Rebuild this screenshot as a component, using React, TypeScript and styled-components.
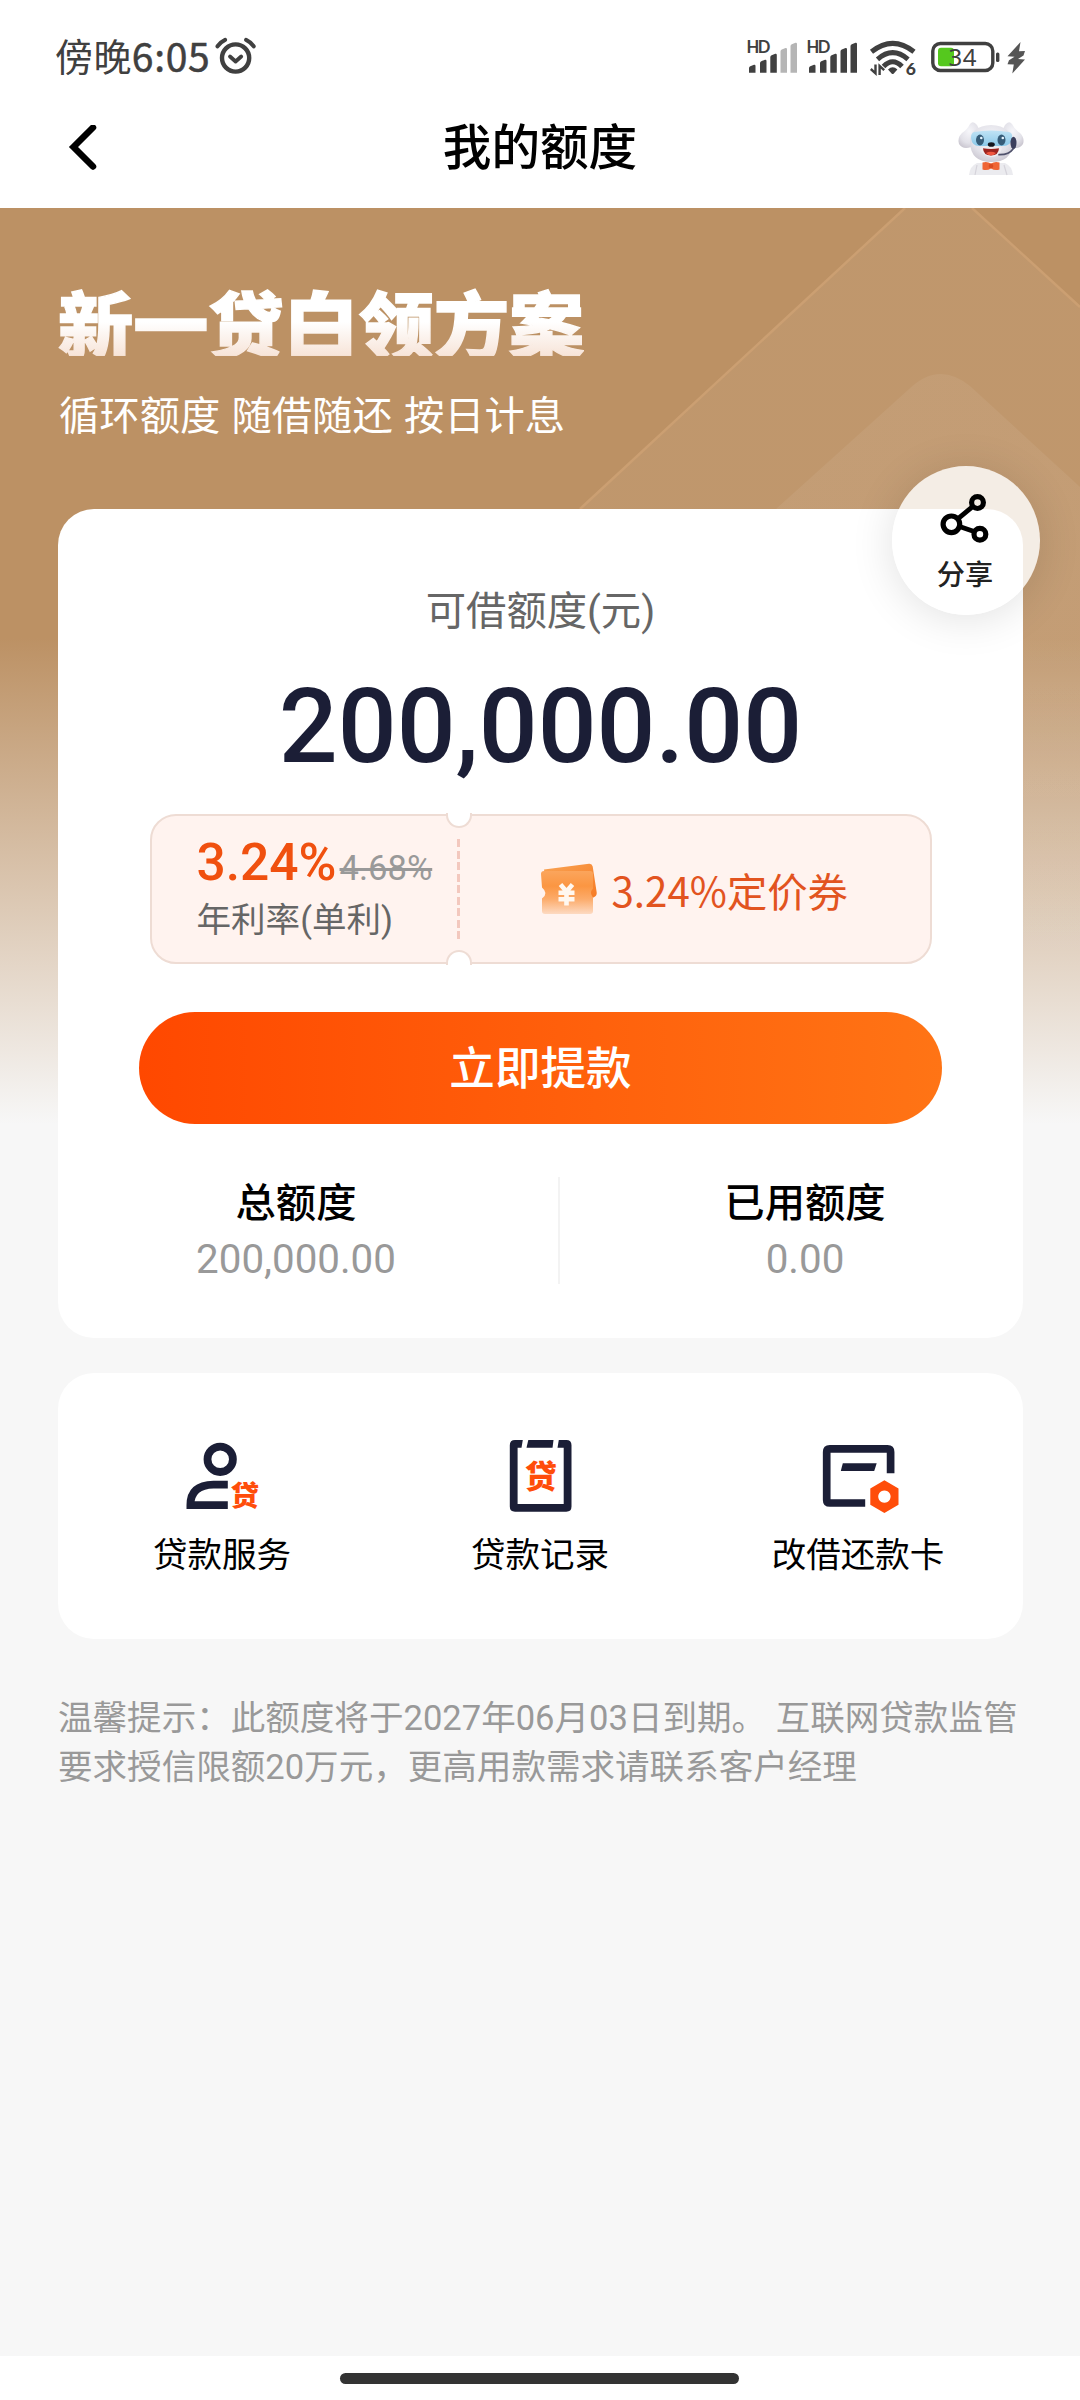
import React from "react";
import styled, { createGlobalStyle } from "styled-components";

const ui = `Roboto, "Noto Sans CJK SC", sans-serif`;
const cjk = `"Noto Sans CJK SC", sans-serif`;
const ink = "#1b1e36";
const accent = "#ff4d0a";

const GlobalStyle = createGlobalStyle`
  * { box-sizing: border-box; }
  body { margin: 0; background: #fff; font-family: ${ui}; }
`;

const Screen = styled.div`
  width: 1080px;
  height: 2400px;
  display: flex;
  flex-direction: column;
  background: #fff;
  overflow: hidden;
`;

const StatusBar = styled.header`
  height: 88px;
  padding: 26px 54px 0 55px;
  display: flex;
  align-items: center;
  justify-content: space-between;
  color: #404040;
`;

const Clock = styled.div`
  display: flex;
  align-items: center;
  gap: 5px;
  font: 400 38px/48px ${cjk};
  white-space: nowrap;
`;

const Time = styled.span`
  display: flex;
  letter-spacing: 0.4px;
  margin-top: -5px;
`;

const Digits = styled.span`
  font-size: 39px;
  letter-spacing: 0.7px;
  -webkit-text-stroke: 0.5px #404040;
`;

const NavBar = styled.nav`
  height: 120px;
  padding: 0 54px 0 68px;
  display: grid;
  grid-template-columns: 1fr auto 1fr;
  align-items: center;
`;

const NavTitle = styled.h1`
  margin: 2px 0 0 -14px;
  font: 500 48.6px/60px ${ui};
  color: #000;
`;

const NavEnd = styled.div`
  display: flex;
  justify-content: flex-end;
`;

const Body = styled.main`
  flex: 1;
  position: relative;
  padding: 79px 57px 0 58px;
  background: linear-gradient(
    to bottom,
    #bc9164 0,
    #bc9164 430px,
    #f7f7f7 916px
  );
`;

const Pattern = styled.svg`
  position: absolute;
  left: 0;
  top: 0;
`;

const Headline = styled.h2`
  position: relative;
  margin: 0;
  width: max-content;
  font: 900 75.2px/70px ${cjk};
  transform: scaleY(0.97);
  background: linear-gradient(to bottom, #fff 50%, #f7e4d8 100%);
  background-clip: text;
  -webkit-background-clip: text;
  -webkit-text-stroke: 1.5px transparent;
  color: transparent;
`;

const SubHeadline = styled.p`
  position: relative;
  margin: 36px 0 68px;
  padding-left: 1px;
  font: 400 40.32px/48px ${ui};
  word-spacing: 1.2px;
  color: #fff;
`;

const Card = styled.section`
  position: relative;
  background: #fff;
  border-radius: 36px;
`;

const QuotaCard = styled(Card)`
  height: 829px;
  padding-top: 79px;
  display: flex;
  flex-direction: column;
  align-items: center;
`;

const QuotaLabel = styled.div`
  font: 400 40.32px/48px ${ui};
  color: #666;
`;

const QuotaAmount = styled.div`
  margin-top: 39px;
  font: 500 103.68px/104px ${ui};
  color: ${ink};
`;

const ShareButton = styled.button`
  position: absolute;
  left: 834px;
  top: -43px;
  width: 148px;
  height: 149px;
  border: 0;
  padding: 26px 2px 0 0;
  border-radius: 50%;
  background: rgba(255, 255, 255, 0.81);
  box-shadow: 0 4px 44px rgba(0, 0, 0, 0.12);
  display: flex;
  flex-direction: column;
  align-items: center;
  gap: 14px;
  font: 500 28.2px/36px ${ui};
  color: #222;
`;

const Coupon = styled.div`
  position: relative;
  margin-top: 35px;
  width: 782px;
  height: 150px;
  display: grid;
  grid-template-columns: 307px 1fr;
  border: 2px solid #eedcd4;
  border-radius: 26px;
  background: #fff3ef;
`;

const Notch = styled.i<{ $edge: "top" | "bottom" }>`
  position: absolute;
  left: 294px;
  ${(p) => p.$edge}: -3px;
  width: 26px;
  height: 15px;
  background: #fff;
  border: 2px solid #eedcd4;
  border-${(p) => p.$edge}: 0;
  border-radius: ${(p) => (p.$edge === "top" ? "0 0 13px 13px" : "13px 13px 0 0")};
`;

const Rate = styled.div`
  position: relative;
  padding: 23px 0 0 45px;
`;

const Perforation = styled.div`
  position: absolute;
  right: -1px;
  top: 23px;
  width: 3px;
  height: 101px;
  background: repeating-linear-gradient(
    to bottom,
    #f3c8be 0,
    #f3c8be 8px,
    transparent 8px,
    transparent 11.55px
  );
`;

const RateRow = styled.div`
  height: 48px;
  display: flex;
  align-items: baseline;
  gap: 3px;
  white-space: nowrap;
  font: 500 51.5px/48px ${ui};
  color: #f0500f;
`;

const OldRate = styled.s`
  font-size: 34.56px;
  font-weight: 400;
  color: #999;
`;

const RateNote = styled.div`
  margin-top: 12px;
  font: 400 34.56px/42px ${ui};
  color: #666;
`;

const Voucher = styled.div`
  display: flex;
  align-items: center;
  padding-left: 80px;
  gap: 13px;
  font: 400 40.32px/48px ${cjk};
  color: #e2541f;
  white-space: nowrap;
`;

const VoucherText = styled.span`
  margin-top: 2px;
`;

const WithdrawButton = styled.button`
  margin-top: 48px;
  width: 803px;
  height: 112px;
  border: 0;
  padding: 3px 0 0;
  border-radius: 56px;
  background: linear-gradient(to right, #ff4800, #ff7415);
  font: 500 45.6px/60px ${ui};
  color: #fff;
`;

const Stats = styled.div`
  align-self: stretch;
  margin-top: 53px;
  height: 106px;
  display: grid;
  grid-template-columns: 476px 1fr 436px;
`;

const Stat = styled.div`
  padding-top: 3px;
  text-align: center;
`;

const StatLabel = styled.div`
  font: 500 40.32px/48px ${ui};
  color: #000;
`;

const StatValue = styled.div`
  margin-top: 8px;
  font: 400 40.32px/48px ${ui};
  color: #999;
`;

const Divider = styled.div`
  justify-self: start;
  margin-left: 24px;
  width: 2px;
  background: #f3f3f3;
`;

const ServiceCard = styled(Card)`
  margin-top: 35px;
  height: 266px;
  padding: 65px 6px 0 5px;
  display: grid;
  grid-template-columns: repeat(3, 1fr);
`;

const Service = styled.div`
  display: flex;
  flex-direction: column;
  align-items: center;
  gap: 20px;
  font: 400 34.56px/42px ${ui};
  color: #000;
`;

const Tip = styled.p`
  margin: 55px 0 0;
  font: 400 34.56px/49px ${ui};
  word-spacing: 1px;
  color: #999;
  white-space: pre-line;
`;

const HomeArea = styled.footer`
  height: 44px;
  padding: 17px 1px 0 0;
  display: flex;
  justify-content: center;
`;

const HomeBar = styled.div`
  width: 399px;
  height: 11px;
  border-radius: 6px;
  background: #333;
`;

const AlarmIcon = () => (
  <svg width="42" height="40" viewBox="216 37.500 42 40" fill="none" stroke="#404040" strokeLinecap="round">
    <circle cx="236.6" cy="58.5" r="13.6" strokeWidth="4.4" />
    <path d="M231 57l5.6 5 5.6-5" strokeWidth="3.8" strokeLinejoin="round" />
    <path d="M218.5 46.800q3.400-4.500 7.600-6.400M254.700 46.800q-3.400-4.500-7.600-6.400" strokeWidth="4" />
  </svg>
);

const BARS = [
  { x: 749, y: 64.7 },
  { x: 760, y: 59.7 },
  { x: 770.3, y: 53.7 },
  { x: 780.5, y: 48 },
  { x: 790.5, y: 42.7 },
];

const Signal = ({ dx, level }: { dx: number; level: number }) => (
  <g transform={`translate(${dx} 0)`}>
    <text x="746.400" y="53" fontFamily="Lato, sans-serif" fontWeight="700" fontSize="16.6" fill="#404040" textLength="24">
      HD
    </text>
    {BARS.map((b, i) => (
      <path
        key={b.x}
        d={`M${b.x} 72.800V${b.y + 3.5}q0-1.500 1.300-2l3.700-1.500q1.500-.3 1.500 1.200V72.800z`}
        fill={i < level ? "#404040" : "#b5b5b5"}
      />
    ))}
  </g>
);

const StatusIcons = () => (
  <svg width="280" height="44" viewBox="746 35 280 44">
    <Signal dx={0} level={3} />
    <Signal dx={60} level={5} />
    <g fill="none" stroke="#404040" strokeWidth="5">
      <path d="M871.500 51.800Q892.700 35 914 51.800" />
      <path d="M877.500 59.300Q892.700 46 908 59.300" />
      <path d="M883.500 66.500Q892.700 57 902 66.500" />
    </g>
    <path d="M888 69.500q4.700-4.500 9.400 0l-3.800 4.200q-.9.700-1.800 0z" fill="#404040" />
    <path d="M875.500 64.500v8.800l-4.700-4.300M879.600 75V66l4.600 4.200" fill="none" stroke="#404040" strokeWidth="2.400" />
    <text x="905.800" y="74.800" fontFamily="Lato, sans-serif" fontWeight="900" fontSize="17.500" fill="#404040">
      6
    </text>
    <rect x="932.800" y="43.500" width="60" height="27" rx="7.500" fill="none" stroke="#404040" strokeWidth="3.400" />
    <rect x="938" y="47.800" width="16" height="18.500" rx="3" fill="#55c81e" />
    <text x="948.500" y="65.800" fontFamily="Noto Sans, sans-serif" fontSize="24" fill="#404040" textLength="28">
      34
    </text>
    <rect x="996" y="52.500" width="3.400" height="9.500" rx="1.500" fill="#404040" />
    <path d="M1020.500 42l-13 14.200 7 .6-5.500 3.400-1.500 4 6.300.3-1.500 9 12.700-14-7-.5 5.500-3.500 1.500-4.500-6 .2z" fill="#555" />
  </svg>
);

const BackIcon = () => (
  <svg width="30" height="46" viewBox="68 125 30 46" fill="none" stroke="#000" strokeWidth="6.500" strokeLinecap="round">
    <path d="M93 127.500L73.500 147 93 166.500" />
  </svg>
);

const Mascot = () => (
  <svg width="70" height="56" viewBox="956 120 70 56">
    <defs>
      <radialGradient id="fur" cx="50%" cy="35%" r="70%">
        <stop offset="0" stopColor="#f6f6fa" />
        <stop offset="0.650" stopColor="#e2e1e8" />
        <stop offset="1" stopColor="#c8c4ce" />
      </radialGradient>
      <linearGradient id="visor" x1="0" y1="0" x2="0" y2="1">
        <stop offset="0" stopColor="#c0e3f5" />
        <stop offset="1" stopColor="#8ac8e8" />
      </linearGradient>
    </defs>
    <path d="M969 175q1-9 8-12h28q7 3 8 12z" fill="#ebebef" />
    <path d="M977 165l-2 10M1004 165l3 10" stroke="#d5d3da" strokeWidth="1.200" />
    <path d="M970 124q3-4 7 1l3 6-9 16q-8 3-12-3-2-6 3-11 5-3 8-9z" fill="url(#fur)" />
    <path d="M1012 124q-3-4-7 1l-3 6 9 16q8 3 12-3 2-6-3-11-5-3-8-9z" fill="url(#fur)" />
    <path d="M970 143q0-17 21-18 22 1 21 19 0 18-21 18-20 0-21-19z" fill="url(#fur)" />
    <path d="M974 132q17-3 35 0 4 1 3 6-1 8-9 8h-24q-7 0-8-8 0-5 3-6z" fill="url(#visor)" />
    <ellipse cx="980" cy="140" rx="4" ry="5.400" fill="#365c78" />
    <ellipse cx="1001.500" cy="140" rx="4" ry="5.400" fill="#365c78" />
    <circle cx="981.300" cy="138" r="1.300" fill="#e7f6ff" />
    <circle cx="1002.800" cy="138" r="1.300" fill="#e7f6ff" />
    <path d="M980 148q11-5 22 0-2 9-11 9-9-1-11-9z" fill="#eeecf0" />
    <ellipse cx="991.300" cy="144.500" rx="3.500" ry="2.300" fill="#15171f" />
    <path d="M983 148.200q8 1.500 16 0-.3 7.200-8 7.400-7.700-.2-8-7.400z" fill="#9c231f" />
    <path d="M986 153q4.800-2.400 10 0-1.800 2.200-5 2.400-3.200-.2-5-2.400z" fill="#f0563f" />
    <ellipse cx="1013.500" cy="143" rx="3" ry="6.200" fill="#3c3f5c" />
    <path d="M1013 149q-4 6-14 5.700" fill="none" stroke="#50526c" strokeWidth="1.700" strokeLinecap="round" />
    <path d="M982.500 162.500q4.500-1.500 8.500 1 4-2.500 8.500-1v7q-4.500 1.500-8.500-1-4 2.500-8.500 1z" fill="#ef6535" />
    <circle cx="991" cy="166" r="2.300" fill="#d94c22" />
  </svg>
);

const ShareIcon = () => (
  <svg width="50" height="52" viewBox="940.500 492 50 52" fill="none" stroke="#000" strokeWidth="5.200">
    <circle cx="951.900" cy="524.300" r="8.300" />
    <circle cx="978" cy="502.600" r="5.900" />
    <circle cx="980.400" cy="534.200" r="5.900" />
    <path d="M958.300 518.800L973.400 506.400M960 526.400L974.600 531.600" strokeWidth="4.800" />
  </svg>
);

const VoucherIcon = () => (
  <svg width="60" height="56" viewBox="540 861.500 60 56">
    <defs>
      <linearGradient id="back" x1="0" y1="0" x2="1" y2="1">
        <stop offset="0" stopColor="#f9a353" />
        <stop offset="1" stopColor="#f67a24" />
      </linearGradient>
      <linearGradient id="front" x1="0" y1="0" x2="0" y2="1">
        <stop offset="0" stopColor="#fba55c" />
        <stop offset="0.350" stopColor="#fb9642" />
        <stop offset="0.650" stopColor="#fcab6a" />
        <stop offset="1" stopColor="#fddac2" />
      </linearGradient>
    </defs>
    <path d="M545 870l45-5.800q3-.3 3.700 2.700l4 26q.3 3-2.500 4.500l-5 3-44-21z" fill="url(#back)" />
    <path
      d="M545 871.500h46q3 0 3 3v14.500q-4 4 0 9v13.500q0 3-3 3h-45q-3 0-3-3v-12.500q7-5 0-11l-1-13.500q0-3 3-3z"
      fill="url(#front)"
    />
    <path
      d="M561.500 885l6 7 6-7M559.500 893.200h16M559.500 899.800h16M567.500 892v14"
      fill="none"
      stroke="#fff8f0"
      strokeWidth="4.600"
    />
  </svg>
);

const PersonLoanIcon = () => (
  <svg width="84" height="76" viewBox="180.500 1438 84 76">
    <circle cx="220.700" cy="1459.300" r="12.700" fill="none" stroke={ink} strokeWidth="7.800" />
    <path d="M228.300 1484.600H214Q190.900 1485 190.900 1505.100H228.300" fill="none" stroke={ink} strokeWidth="7.800" />
    <text x="231" y="1506" fontFamily="Noto Sans CJK SC, sans-serif" fontWeight="900" fontSize="28.500" fill={accent}>
      贷
    </text>
  </svg>
);

const RecordIcon = () => (
  <svg width="84" height="76" viewBox="498.500 1438 84 76" fill={ink}>
    <path d="M523.300 1440H515.500Q510.300 1440 510.300 1445.200V1506.500Q510.300 1511.700 515.500 1511.700H566.800Q572 1511.700 572 1506.500V1445.200Q572 1440 566.800 1440H559.300L558 1447.700H564.200V1504H518.100V1447.700H522z" />
    <path d="M528.800 1440H554L553 1447.700H527z" />
    <text x="525.200" y="1488.200" fontFamily="Noto Sans CJK SC, sans-serif" fontWeight="900" fontSize="32" fill={accent}>
      贷
    </text>
  </svg>
);

const CardSwapIcon = () => (
  <svg width="84" height="76" viewBox="816.500 1438 84 76">
    <path d="M891.100 1473.300V1452Q891.100 1448.800 888 1448.800H830.300Q827.200 1448.800 827.200 1452V1499.900Q827.200 1503 830.300 1503H865.700" fill="none" stroke={ink} strokeWidth="7.700" />
    <path d="M843.300 1463.200H877.200L874.700 1471H841.300z" fill={ink} />
    <path
      d="M884.900 1480.300L899 1488.500V1504.800L884.900 1513 870.800 1504.800V1488.500zM884.900 1490.400a6.200 6.200 0 1 0 .01 0z"
      fill={accent}
      fillRule="evenodd"
    />
  </svg>
);

const services = [
  { label: "贷款服务", Icon: PersonLoanIcon },
  { label: "贷款记录", Icon: RecordIcon },
  { label: "改借还款卡", Icon: CardSwapIcon },
];

export default function App() {
  return (
    <Screen lang="zh-CN">
      <GlobalStyle />
      <StatusBar>
        <Clock>
          <Time>
            傍晚<Digits>6:05</Digits>
          </Time>
          <AlarmIcon />
        </Clock>
        <StatusIcons />
      </StatusBar>
      <NavBar>
        <BackIcon />
        <NavTitle>我的额度</NavTitle>
        <NavEnd>
          <Mascot />
        </NavEnd>
      </NavBar>
      <Body>
        <Pattern width="1080" height="922" viewBox="0 208 1080 922">
          <defs>
            <linearGradient id="fade" x1="0" y1="208" x2="0" y2="1000" gradientUnits="userSpaceOnUse">
              <stop offset="0" stopColor="#fff" />
              <stop offset="0.550" stopColor="#fff" />
              <stop offset="1" stopColor="#fff" stopOpacity="0" />
            </linearGradient>
          </defs>
          <path d="M580 509L905 208H972L1080 307V1000H580z" fill="url(#fade)" fillOpacity="0.055" />
          <path d="M580 509L905 208M972 208L1080 307" stroke="#cb9f72" strokeWidth="2.500" />
          <path d="M776 509L908 390Q938 360 970 386L1080 487V1000H776z" fill="url(#fade)" fillOpacity="0.060" />
        </Pattern>
        <Headline>新一贷白领方案</Headline>
        <SubHeadline>循环额度 随借随还 按日计息</SubHeadline>
        <QuotaCard>
          <QuotaLabel>可借额度(元)</QuotaLabel>
          <QuotaAmount>200,000.00</QuotaAmount>
          <Coupon>
            <Rate>
              <RateRow>
                3.24%<OldRate>4.68%</OldRate>
              </RateRow>
              <RateNote>年利率(单利)</RateNote>
              <Perforation />
            </Rate>
            <Voucher>
              <VoucherIcon />
              <VoucherText>3.24%定价券</VoucherText>
            </Voucher>
            <Notch $edge="top" />
            <Notch $edge="bottom" />
          </Coupon>
          <WithdrawButton>立即提款</WithdrawButton>
          <Stats>
            <Stat>
              <StatLabel>总额度</StatLabel>
              <StatValue>200,000.00</StatValue>
            </Stat>
            <Divider />
            <Stat>
              <StatLabel>已用额度</StatLabel>
              <StatValue>0.00</StatValue>
            </Stat>
          </Stats>
          <ShareButton>
            <ShareIcon />
            分享
          </ShareButton>
        </QuotaCard>
        <ServiceCard>
          {services.map(({ label, Icon }) => (
            <Service key={label}>
              <Icon />
              {label}
            </Service>
          ))}
        </ServiceCard>
        <Tip>
          {"温馨提示：此额度将于2027年06月03日到期。 互联网贷款监管\n要求授信限额20万元，更高用款需求请联系客户经理"}
        </Tip>
      </Body>
      <HomeArea>
        <HomeBar />
      </HomeArea>
    </Screen>
  );
}
